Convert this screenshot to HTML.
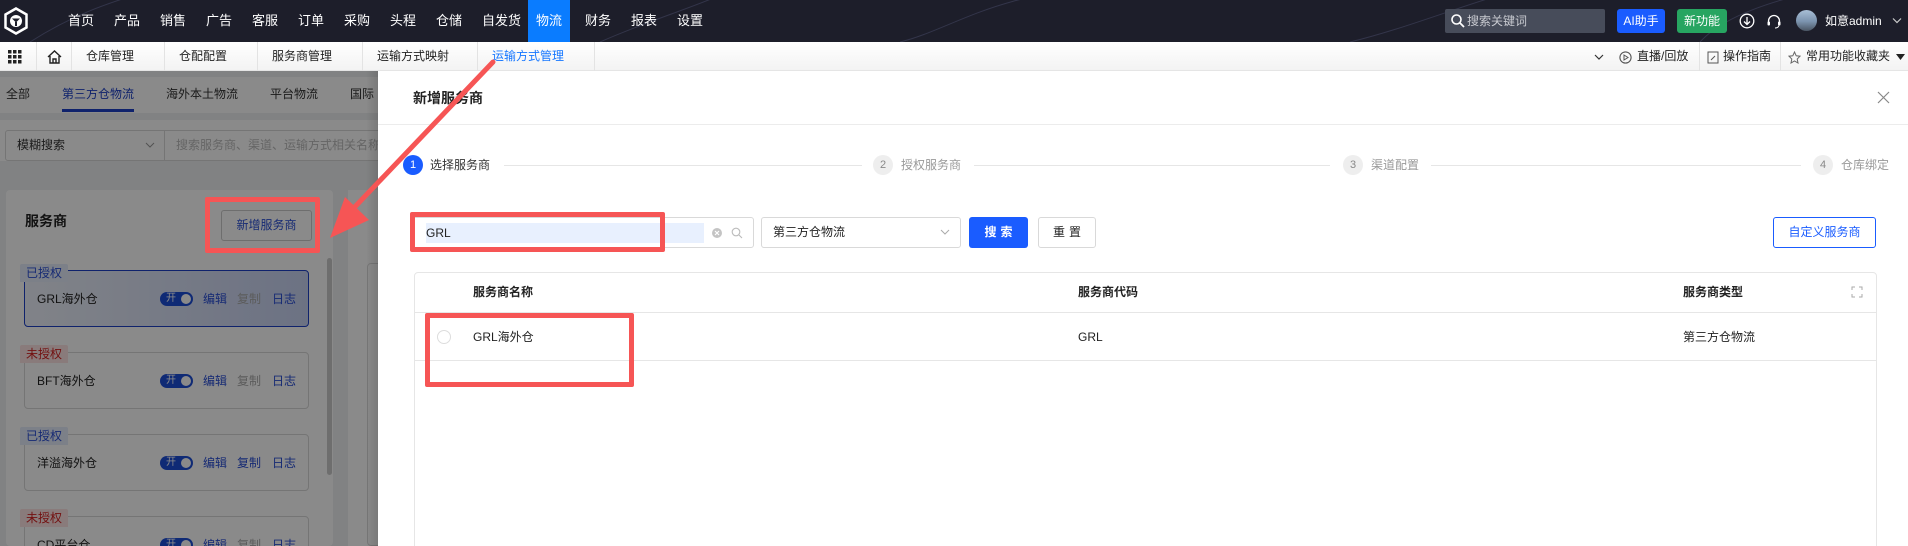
<!DOCTYPE html>
<html><head><meta charset="utf-8">
<style>
*{margin:0;padding:0;box-sizing:border-box}
html,body{width:1908px;height:546px;overflow:hidden}
body{position:relative;background:#fff;font-family:"Liberation Sans","Noto Sans CJK SC",sans-serif;font-size:12px;color:#222}
#root{position:absolute;left:0;top:0;width:1908px;height:546px;overflow:hidden}
.a{position:absolute;white-space:nowrap}
.top{left:0;top:0;width:1908px;height:42px;background:#1d1e2a}
.mi{top:0;height:42px;line-height:42px;color:#fff;font-size:13px}
.nav{left:0;top:42px;width:1908px;height:29px;background:linear-gradient(#fff,#f3f3f3);border-bottom:1px solid #e5e5e5}
.nt{top:42px;height:29px;line-height:29px;font-size:12px;color:#222}
.dv{top:42px;width:1px;height:29px;background:#e3e3e3}
.card{border:1px solid #d9d9d9;border-radius:4px;background:#fff}
.tag{height:18px;line-height:18px;padding:0 6px;font-size:12px;border-radius:2px 2px 0 0}
.sw{width:33px;height:14px;border-radius:7px;background:#1d4ed8;color:#fff;font-size:10px;line-height:14px;padding-left:6px}
.sw:after{content:"";position:absolute;right:2px;top:2px;width:10px;height:10px;border-radius:50%;background:#fff}
.lk{color:#2a4fd6}
.step{width:20px;height:20px;border-radius:50%;background:#eee;color:#888;text-align:center;line-height:20px;font-size:11px}
.sl{height:1px;background:#e6e6e6}
.st{color:#999;font-size:12px;line-height:20px}
</style></head><body><div id="root">
<div class="a top"></div>
<svg class="a" style="left:0;top:0" width="1908" height="42"><g fill="none" stroke="#33354a" stroke-width="1"><path d="M30 42 C80 10 120 0 150 -10"/><path d="M600 42 C650 20 700 5 720 -5"/><path d="M900 42 C 950 30 1000 -10 1100 -10"/><path d="M1350 42 C1400 30 1450 10 1500 -5"/><path d="M1700 42 C1720 20 1760 5 1800 -5"/></g></svg>
<svg class="a" style="left:3px;top:7px" width="26" height="28" viewBox="0 0 26 28"><path d="M13 1.5 L23.5 7.5 V20.5 L13 26.5 L2.5 20.5 V7.5Z" fill="none" stroke="#fff" stroke-width="2.5"/><circle cx="13" cy="14" r="6" fill="#fff"/><path d="M9 11.5 H17 L13 15.5Z M12 15 H14 V19 H12Z" fill="#1d1e2a"/></svg>
<div class="a" style="left:528px;top:0;width:42px;height:42px;background:#0a7cff"></div>
<div class="a mi" style="left:68px">首页</div><div class="a mi" style="left:114px">产品</div><div class="a mi" style="left:160px">销售</div><div class="a mi" style="left:206px">广告</div><div class="a mi" style="left:252px">客服</div><div class="a mi" style="left:298px">订单</div><div class="a mi" style="left:344px">采购</div><div class="a mi" style="left:390px">头程</div><div class="a mi" style="left:436px">仓储</div><div class="a mi" style="left:482px">自发货</div><div class="a mi" style="left:536px">物流</div><div class="a mi" style="left:585px">财务</div><div class="a mi" style="left:631px">报表</div><div class="a mi" style="left:677px">设置</div>
<div class="a" style="left:1445px;top:9px;width:160px;height:24px;background:#474c5a;border-radius:2px"></div>
<svg class="a" style="left:1450px;top:13px" width="16" height="16"><circle cx="6.5" cy="6.5" r="4.5" fill="none" stroke="#fff" stroke-width="1.6"/><path d="M10 10 L14 14" stroke="#fff" stroke-width="1.8"/></svg>
<div class="a" style="left:1467px;top:9px;line-height:24px;color:#c8cad0;font-size:12px">搜索关键词</div>
<div class="a" style="left:1617px;top:9px;width:48px;height:24px;background:#1a5cff;border-radius:3px;color:#fff;line-height:24px;text-align:center;font-size:12px">AI助手</div>
<div class="a" style="left:1677px;top:9px;width:50px;height:24px;background:#27a561;border-radius:3px;color:#fff;line-height:24px;text-align:center;font-size:12px">新功能</div>
<svg class="a" style="left:1739px;top:13px" width="16" height="16"><circle cx="8" cy="8" r="6.8" fill="none" stroke="#fff" stroke-width="1.3"/><path d="M8 4 V11 M5 8.5 L8 11.5 L11 8.5" fill="none" stroke="#fff" stroke-width="1.3"/></svg>
<svg class="a" style="left:1766px;top:13px" width="16" height="16"><path d="M2.5 10 V8 A5.5 5.5 0 0 1 13.5 8 V10" fill="none" stroke="#fff" stroke-width="1.3"/><rect x="1.5" y="8.5" width="2.5" height="4" rx="1" fill="#fff"/><rect x="12" y="8.5" width="2.5" height="4" rx="1" fill="#fff"/><path d="M13 12.5 Q12 15 9 15" fill="none" stroke="#fff"/></svg>
<div class="a" style="left:1796px;top:10px;width:21px;height:21px;border-radius:50%;background:linear-gradient(#a9bfd6,#7b93ae 55%,#4a5563)"></div>
<div class="a" style="left:1825px;top:0;line-height:42px;color:#fff;font-size:12px">如意admin</div>
<svg class="a" style="left:1892px;top:17px" width="10" height="8"><path d="M1 1.5 L5 5.5 L9 1.5" fill="none" stroke="#ccc" stroke-width="1.2"/></svg>
<div class="a nav"></div>
<svg class="a" style="left:8px;top:50px" width="14" height="14"><g fill="#222"><rect x="0" y="0" width="3.5" height="3.5"/><rect x="5" y="0" width="3.5" height="3.5"/><rect x="10" y="0" width="3.5" height="3.5"/><rect x="0" y="5" width="3.5" height="3.5"/><rect x="5" y="5" width="3.5" height="3.5"/><rect x="10" y="5" width="3.5" height="3.5"/><rect x="0" y="10" width="3.5" height="3.5"/><rect x="5" y="10" width="3.5" height="3.5"/><rect x="10" y="10" width="3.5" height="3.5"/></g></svg>
<div class="a dv" style="left:36px"></div>
<svg class="a" style="left:47px;top:50px" width="15" height="14"><path d="M1 7 L7.5 1 L14 7 M3 6 V13 H12 V6 M6 13 V9 H9 V13" fill="none" stroke="#222" stroke-width="1.4"/></svg>
<div class="a dv" style="left:71px"></div>
<div class="a nt" style="left:86px">仓库管理</div><div class="a dv" style="left:164px"></div>
<div class="a nt" style="left:179px">仓配配置</div><div class="a dv" style="left:257px"></div>
<div class="a nt" style="left:272px">服务商管理</div><div class="a dv" style="left:362px"></div>
<div class="a nt" style="left:377px">运输方式映射</div><div class="a dv" style="left:477px"></div>
<div class="a nt" style="left:492px;color:#1677ff">运输方式管理</div><div class="a dv" style="left:594px"></div>
<svg class="a" style="left:1594px;top:54px" width="10" height="7"><path d="M1 1 L5 5 L9 1" fill="none" stroke="#333" stroke-width="1.2"/></svg>
<svg class="a" style="left:1619px;top:51px" width="13" height="13"><circle cx="6.5" cy="6.5" r="5.6" fill="none" stroke="#555" stroke-width="1.1"/><path d="M5 4 L9 6.5 L5 9Z" fill="none" stroke="#555"/></svg>
<div class="a nt" style="left:1637px">直播/回放</div><div class="a dv" style="left:1699px"></div>
<svg class="a" style="left:1707px;top:51px" width="12" height="13"><rect x="1" y="1" width="10" height="11" fill="none" stroke="#555"/><path d="M4 9 L8 5" stroke="#555"/></svg>
<div class="a nt" style="left:1723px">操作指南</div><div class="a dv" style="left:1780px"></div>
<svg class="a" style="left:1788px;top:51px" width="13" height="13"><path d="M6.5 1 L8.2 4.8 L12 5.2 L9.2 8 L10 12 L6.5 10 L3 12 L3.8 8 L1 5.2 L4.8 4.8Z" fill="none" stroke="#666"/></svg>
<div class="a nt" style="left:1806px">常用功能收藏夹</div>
<svg class="a" style="left:1896px;top:54px" width="10" height="7"><path d="M0 0 H9 L4.5 6Z" fill="#222"/></svg>
<div class="a" style="left:0;top:71px;width:378px;height:475px;background:#eef0f3"></div>
<div class="a" style="left:0;top:77px;width:378px;height:36px;background:#fff"></div>
<div class="a" style="left:6px;top:77px;line-height:34px;color:#333">全部</div>
<div class="a" style="left:62px;top:77px;line-height:34px;color:#1d40c8">第三方仓物流</div>
<div class="a" style="left:62px;top:109px;width:72px;height:3px;background:#1d40c8"></div>
<div class="a" style="left:166px;top:77px;line-height:34px;color:#333">海外本土物流</div>
<div class="a" style="left:270px;top:77px;line-height:34px;color:#333">平台物流</div>
<div class="a" style="left:350px;top:77px;line-height:34px;color:#333">国际</div>
<div class="a" style="left:0;top:120px;width:378px;height:41px;background:#fff"></div>
<div class="a" style="left:5px;top:130px;width:380px;height:31px;border:1px solid #d9d9d9;border-radius:3px"></div>
<div class="a" style="left:164px;top:130px;width:1px;height:31px;background:#d9d9d9"></div>
<div class="a" style="left:17px;top:130px;line-height:31px;color:#333">模糊搜索</div>
<svg class="a" style="left:145px;top:142px" width="10" height="7"><path d="M1 1 L5 5 L9 1" fill="none" stroke="#999"/></svg>
<div class="a" style="left:176px;top:130px;line-height:31px;color:#bbb">搜索服务商、渠道、运输方式相关名称</div>
<div class="a" style="left:6px;top:190px;width:327px;height:356px;background:#fff;border-radius:4px"></div>
<div class="a" style="left:348px;top:190px;width:40px;height:356px;background:#fff"></div>
<div class="a" style="left:367px;top:263px;width:30px;height:283px;border:1px solid #ddd;border-radius:4px"></div>
<div class="a" style="left:25px;top:211px;line-height:20px;font-size:14px;font-weight:bold;color:#222">服务商</div>
<div class="a" style="left:221px;top:210px;width:91px;height:31px;border:1px solid #ccc;border-radius:3px;color:#2a4fd6;line-height:29px;text-align:center">新增服务商</div>
<div class="a" style="left:327px;top:258px;width:5px;height:217px;background:#ccc;border-radius:3px"></div>
<div class="a card" style="left:24px;top:270px;width:285px;height:57px;border-color:#1d40c8;background:linear-gradient(90deg,#eef2fb,#c8d3f3)"></div>
<div class="a tag" style="left:20px;top:264px;background:#e6ecfb;color:#2a4fd6">已授权</div>
<div class="a" style="left:37px;top:291px;line-height:16px;font-size:12px">GRL海外仓</div>
<div class="a sw" style="left:160px;top:292px">开</div>
<div class="a lk" style="left:203px;top:291px;line-height:16px">编辑</div><div class="a" style="left:237px;top:291px;line-height:16px;color:#aaa">复制</div><div class="a lk" style="left:272px;top:291px;line-height:16px">日志</div>
<div class="a card" style="left:24px;top:352px;width:285px;height:57px"></div>
<div class="a tag" style="left:20px;top:345px;background:#fde4e4;color:#d42020">未授权</div>
<div class="a" style="left:37px;top:373px;line-height:16px">BFT海外仓</div>
<div class="a sw" style="left:160px;top:374px">开</div>
<div class="a lk" style="left:203px;top:373px;line-height:16px">编辑</div><div class="a" style="left:237px;top:373px;line-height:16px;color:#aaa">复制</div><div class="a lk" style="left:272px;top:373px;line-height:16px">日志</div>
<div class="a card" style="left:24px;top:434px;width:285px;height:57px"></div>
<div class="a tag" style="left:20px;top:427px;background:#e6ecfb;color:#2a4fd6">已授权</div>
<div class="a" style="left:37px;top:455px;line-height:16px">洋溢海外仓</div>
<div class="a sw" style="left:160px;top:456px">开</div>
<div class="a lk" style="left:203px;top:455px;line-height:16px">编辑</div><div class="a lk" style="left:237px;top:455px;line-height:16px">复制</div><div class="a lk" style="left:272px;top:455px;line-height:16px">日志</div>
<div class="a card" style="left:24px;top:516px;width:285px;height:57px"></div>
<div class="a tag" style="left:20px;top:509px;background:#fde4e4;color:#d42020">未授权</div>
<div class="a" style="left:37px;top:537px;line-height:16px">CD平台仓</div>
<div class="a sw" style="left:160px;top:538px">开</div>
<div class="a lk" style="left:203px;top:537px;line-height:16px">编辑</div><div class="a" style="left:237px;top:537px;line-height:16px;color:#aaa">复制</div><div class="a lk" style="left:272px;top:537px;line-height:16px">日志</div>
<div class="a" style="left:0;top:71px;width:378px;height:475px;background:rgba(0,0,0,0.46)"></div>
<div class="a" style="left:366px;top:71px;width:12px;height:475px;background:linear-gradient(90deg,rgba(0,0,0,0),rgba(0,0,0,0.12))"></div>
<div class="a" style="left:378px;top:71px;width:1530px;height:475px;background:#fff"></div>
<div class="a" style="left:413px;top:88px;line-height:20px;font-size:14px;font-weight:bold;color:#222">新增服务商</div>
<svg class="a" style="left:1877px;top:91px" width="13" height="13"><path d="M1 1 L12 12 M12 1 L1 12" stroke="#888" stroke-width="1.2"/></svg>
<div class="a" style="left:378px;top:124px;width:1530px;height:1px;background:#ececec"></div>
<div class="a step" style="left:403px;top:155px;background:#1a5cff;color:#fff">1</div>
<div class="a st" style="left:430px;top:155px;color:#333">选择服务商</div>
<div class="a sl" style="left:504px;top:165px;width:358px"></div>
<div class="a step" style="left:873px;top:155px">2</div>
<div class="a st" style="left:901px;top:155px">授权服务商</div>
<div class="a sl" style="left:974px;top:165px;width:356px"></div>
<div class="a step" style="left:1343px;top:155px">3</div>
<div class="a st" style="left:1371px;top:155px">渠道配置</div>
<div class="a sl" style="left:1431px;top:165px;width:370px"></div>
<div class="a step" style="left:1813px;top:155px">4</div>
<div class="a st" style="left:1841px;top:155px">仓库绑定</div>
<div class="a" style="left:410px;top:217px;width:344px;height:31px;border:1px solid #d9d9d9;border-radius:3px"></div>
<div class="a" style="left:426px;top:223px;width:278px;height:20px;background:#e8f0fe"></div>
<div class="a" style="left:426px;top:223px;line-height:20px;font-size:12px;color:#222">GRL</div>
<svg class="a" style="left:712px;top:228px" width="10" height="10"><circle cx="5" cy="5" r="5" fill="#c4c4c4"/><path d="M3 3 L7 7 M7 3 L3 7" stroke="#fff" stroke-width="1.2"/></svg>
<svg class="a" style="left:731px;top:227px" width="12" height="12"><circle cx="5" cy="5" r="3.8" fill="none" stroke="#bbb" stroke-width="1.1"/><path d="M8 8 L11 11" stroke="#bbb" stroke-width="1.1"/></svg>
<div class="a" style="left:761px;top:217px;width:200px;height:31px;border:1px solid #d9d9d9;border-radius:3px"></div>
<div class="a" style="left:773px;top:217px;line-height:31px;color:#222">第三方仓物流</div>
<svg class="a" style="left:940px;top:229px" width="10" height="7"><path d="M1 1 L5 5 L9 1" fill="none" stroke="#aaa"/></svg>
<div class="a" style="left:969px;top:217px;width:59px;height:31px;background:#1a5cff;border-radius:3px;color:#fff;line-height:31px;text-align:center;font-weight:bold;letter-spacing:4px;padding-left:4px">搜索</div>
<div class="a" style="left:1038px;top:217px;width:58px;height:31px;border:1px solid #d9d9d9;border-radius:3px;line-height:29px;text-align:center;letter-spacing:4px;padding-left:4px">重置</div>
<div class="a" style="left:1773px;top:217px;width:103px;height:31px;border:1px solid #1a5cff;border-radius:3px;color:#1a5cff;line-height:29px;text-align:center">自定义服务商</div>
<div class="a" style="left:414px;top:272px;width:1463px;height:290px;border:1px solid #e6e6e6;border-radius:4px"></div>
<div class="a" style="left:415px;top:312px;width:1461px;height:1px;background:#e6e6e6"></div>
<div class="a" style="left:415px;top:360px;width:1461px;height:1px;background:#e6e6e6"></div>
<div class="a" style="left:473px;top:284px;line-height:16px;font-weight:bold">服务商名称</div>
<div class="a" style="left:1078px;top:284px;line-height:16px;font-weight:bold">服务商代码</div>
<div class="a" style="left:1683px;top:284px;line-height:16px;font-weight:bold">服务商类型</div>
<svg class="a" style="left:1851px;top:286px" width="12" height="12"><path d="M1 4 V1 H4 M8 1 H11 V4 M11 8 V11 H8 M4 11 H1 V8" fill="none" stroke="#aaa"/></svg>
<div class="a" style="left:437px;top:330px;width:14px;height:14px;border:1px solid #ddd;border-radius:50%"></div>
<div class="a" style="left:473px;top:329px;line-height:16px">GRL海外仓</div>
<div class="a" style="left:1078px;top:329px;line-height:16px">GRL</div>
<div class="a" style="left:1683px;top:329px;line-height:16px">第三方仓物流</div>
<div class="a" style="left:205px;top:197px;width:115px;height:56px;border:5px solid #f65555;border-radius:2px"></div>
<div class="a" style="left:410px;top:212px;width:255px;height:40px;border:5px solid #f65555;border-radius:2px"></div>
<div class="a" style="left:425px;top:313px;width:209px;height:74px;border:5px solid #f65555;border-radius:2px"></div>
<svg class="a" style="left:0;top:0" width="1908" height="546"><path d="M493 62 L350 212" stroke="#f65555" stroke-width="5" stroke-linecap="round"/><path d="M330 238 L345 197 L369 220Z" fill="#f65555"/></svg>
</div></body></html>
